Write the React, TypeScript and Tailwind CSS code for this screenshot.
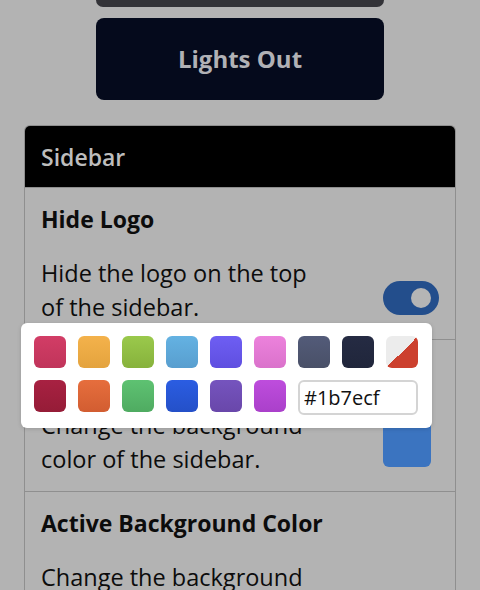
import React from 'react';

const ROW1 = [
  'bg-[linear-gradient(to_bottom,#d23d66,#c0345a)]',
  'bg-[linear-gradient(to_bottom,#f4b24b,#e4a33e)]',
  'bg-[linear-gradient(to_bottom,#9ac94c,#87b23c)]',
  'bg-[linear-gradient(to_bottom,#64b2e2,#589ecf)]',
  'bg-[linear-gradient(to_bottom,#6e5ef3,#5f4fe0)]',
  'bg-[linear-gradient(to_bottom,#ec82dc,#da72cb)]',
  'bg-[linear-gradient(to_bottom,#535b79,#495067)]',
  'bg-[linear-gradient(to_bottom,#252b43,#20263b)]',
  'bg-[linear-gradient(to_bottom_right,#ececec_50%,#cc402e_50%)]'
];

const ROW2 = [
  'bg-[linear-gradient(to_bottom,#a82142,#951c37)]',
  'bg-[linear-gradient(to_bottom,#e66e3d,#d25d31)]',
  'bg-[linear-gradient(to_bottom,#5ec272,#4fab61)]',
  'bg-[linear-gradient(to_bottom,#2b5de2,#2450c8)]',
  'bg-[linear-gradient(to_bottom,#7554be,#6947aa)]',
  'bg-[linear-gradient(to_bottom,#be4ddd,#aa40ca)]'
];

function Section({ title, desc, control }: { title: string; desc: string; control?: React.ReactNode }) {
  return (
    <div className="border-t border-[#8f8f8f] px-4 pb-[15px] pt-4">
      <div className="text-[23px] font-bold leading-[30px] text-[#0c0c0c]">{title}</div>
      <div className="mt-[22px] flex items-end justify-between">
        <p className="w-[292px] text-[23.5px] leading-[34px] text-[#0c0c0c]">{desc}</p>
        {control && <div className="mb-[9px] w-[56px] shrink-0">{control}</div>}
      </div>
    </div>
  );
}

export default function App() {
  return (
    <div className="h-[590px] w-[480px] overflow-hidden bg-[#b3b3b3] font-['Open_Sans',sans-serif]">
      <div className="flex flex-col items-center">
        <div className="h-[7px] w-[288px] shrink-0 rounded-b-[8px] bg-[#333338]" />
        <button className="mt-[11px] flex h-[82px] w-[288px] shrink-0 items-center justify-center rounded-[8px] bg-[#050a1c] text-[24px] font-bold text-[#b1b1b5]">
          Lights Out
        </button>

        <div className="relative mt-[25px] w-[432px] shrink-0 rounded-t-[6px] border-x border-t border-[#8f8f8f]">
          <div className="flex h-[62px] items-center rounded-t-[5px] bg-black px-4 text-[23px] font-semibold text-[#bdbdbd]">
            Sidebar
          </div>
          <div className="-mt-px">
            <Section
              title="Hide Logo"
              desc="Hide the logo on the top of the sidebar."
              control={
                <div className="flex h-[34px] w-[56px] items-center justify-end rounded-full bg-[#234e8c] pr-[8px]">
                  <div className="h-[20px] w-[20px] rounded-full bg-[#b5b5b5]" />
                </div>
              }
            />
            <Section
              title="Background Color"
              desc="Change the background color of the sidebar."
              control={<div className="h-[48px] w-[48px] rounded-[6px] bg-[#3b74c0]" />}
            />
            <Section title="Active Background Color" desc="Change the background color of the active item." />
          </div>

          {/* colour picker popover */}
          <div className="absolute left-[-4px] top-[197px] z-10 w-[411px] rounded-[6px] bg-white p-[13px] shadow-[0_1px_4px_rgba(0,0,0,0.15)]">
            <div className="flex gap-[12px]">
              {ROW1.map((c, i) => (
                <div key={i} className={`h-[32px] w-[32px] rounded-[6px] ${c}`} />
              ))}
            </div>
            <div className="mt-[12px] flex items-start gap-[12px]">
              {ROW2.map((c, i) => (
                <div key={i} className={`h-[32px] w-[32px] rounded-[6px] ${c}`} />
              ))}
              <input
                readOnly
                value="#1b7ecf"
                className="h-[35px] w-[120px] rounded-[6px] border-2 border-[#d4d4d4] px-[4px] text-[20px] text-[#111] outline-none"
              />
            </div>
          </div>
        </div>
      </div>
    </div>
  );
}
